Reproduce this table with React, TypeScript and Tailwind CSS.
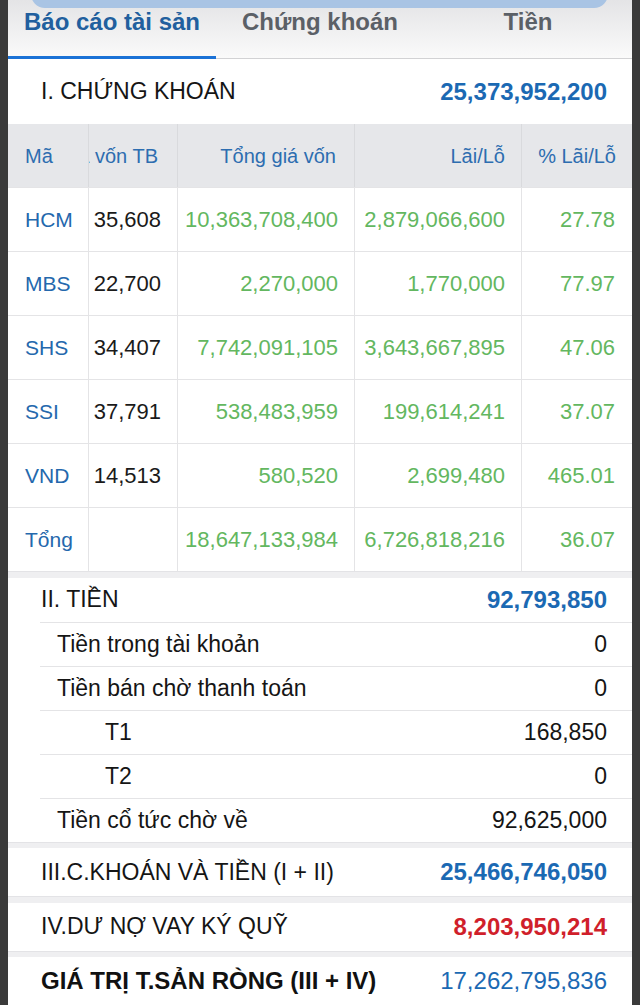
import React from "react";

const font = { fontFamily: '"Liberation Sans", Arial, sans-serif' };

const rows = [
  { code: "HCM", avg: "35,608", cost: "10,363,708,400", pl: "2,879,066,600", pct: "27.78" },
  { code: "MBS", avg: "22,700", cost: "2,270,000", pl: "1,770,000", pct: "77.97" },
  { code: "SHS", avg: "34,407", cost: "7,742,091,105", pl: "3,643,667,895", pct: "47.06" },
  { code: "SSI", avg: "37,791", cost: "538,483,959", pl: "199,614,241", pct: "37.07" },
  { code: "VND", avg: "14,513", cost: "580,520", pl: "2,699,480", pct: "465.01" },
  { code: "Tổng", avg: "", cost: "18,647,133,984", pl: "6,726,818,216", pct: "36.07" },
];

const cols = "grid grid-cols-[80px_89px_177px_167px_111px]";

function Band() {
  return <div className="h-[7px] bg-[#efeff1] border-t border-[#e3e3e6]" />;
}

export default function App() {
  return (
    <div className="w-[640px] h-[1005px] overflow-hidden bg-[#3a3a3a] px-[8px]" style={font}>
      <div className="bg-white h-full flex flex-col">
        {/* Tab bar */}
        <div className="relative h-[59px] bg-gradient-to-b from-[#e4e4e6] to-[#fafafa] border-b border-[#d2d2d4] shrink-0">
          <div className="absolute left-[23px] right-[24px] top-[-20px] h-[28px] rounded-b-[14px] bg-[#a9c4e4]" />
          <div className="grid grid-cols-3 h-full">
            <div className="relative flex justify-center pt-[7px]">
              <span className="text-[24px] leading-[30px] font-bold text-[#215f9e]">Báo cáo tài sản</span>
              <div className="absolute left-0 right-0 bottom-[-1px] h-[3px] bg-[#1b72d6]" />
            </div>
            <div className="flex justify-center pt-[7px]">
              <span className="text-[24px] leading-[30px] font-bold text-[#5b6067]">Chứng khoán</span>
            </div>
            <div className="flex justify-center pt-[7px]">
              <span className="text-[24px] leading-[30px] font-bold text-[#5b6067]">Tiền</span>
            </div>
          </div>
        </div>

        {/* Section I */}
        <div className="h-[65px] flex items-center justify-between pl-[33px] pr-[25px] shrink-0">
          <span className="text-[23px] text-[#151515]">I. CHỨNG KHOÁN</span>
          <span className="text-[24px] font-bold text-[#1b69b3]">25,373,952,200</span>
        </div>

        {/* Table */}
        <div className="shrink-0">
          <div className={`${cols} h-[63px] bg-[#e6e7ea] text-[20px] text-[#2d6db0]`}>
            <div className="flex items-center pl-[17px]">Mã</div>
            <div className="flex items-center justify-end pr-[19px] overflow-hidden border-l border-[#d9dadd]">
              <span className="whitespace-nowrap shrink-0">Giá vốn TB</span>
            </div>
            <div className="flex items-center justify-end pr-[18px] border-l border-[#d9dadd]">Tổng giá vốn</div>
            <div className="flex items-center justify-end pr-[16px] border-l border-[#d9dadd]">Lãi/Lỗ</div>
            <div className="flex items-center justify-end pr-[16px] border-l border-[#d9dadd]">% Lãi/Lỗ</div>
          </div>
          {rows.map((r) => (
            <div key={r.code} className={`${cols} h-[64px] border-t border-[#e4e4e6] text-[22px]`}>
              <div className="flex items-center pl-[17px] text-[21px] text-[#2468ad]">{r.code}</div>
              <div className="flex items-center justify-end pr-[16px] text-[#1a1a1a] border-l border-[#e4e4e6]">{r.avg}</div>
              <div className="flex items-center justify-end pr-[16px] text-[#63b760] border-l border-[#e4e4e6]">{r.cost}</div>
              <div className="flex items-center justify-end pr-[16px] text-[#63b760] border-l border-[#e4e4e6]">{r.pl}</div>
              <div className="flex items-center justify-end pr-[17px] text-[#63b760] border-l border-[#e4e4e6]">{r.pct}</div>
            </div>
          ))}
        </div>
        <Band />

        {/* Section II */}
        <div className="h-[44px] flex items-center justify-between pl-[33px] pr-[25px] shrink-0">
          <span className="text-[23px] text-[#151515]">II. TIỀN</span>
          <span className="text-[24px] font-bold text-[#1b69b3]">92,793,850</span>
        </div>
        <div className="ml-[32px] text-[23px] text-[#151515]">
          {[
            { label: "Tiền trong tài khoản", value: "0", indent: "pl-[17px]" },
            { label: "Tiền bán chờ thanh toán", value: "0", indent: "pl-[17px]" },
            { label: "T1", value: "168,850", indent: "pl-[65px]" },
            { label: "T2", value: "0", indent: "pl-[65px]" },
            { label: "Tiền cổ tức chờ về", value: "92,625,000", indent: "pl-[17px]" },
          ].map((it) => (
            <div key={it.label} className={`h-[44px] border-t border-[#e4e4e6] flex items-center justify-between pr-[25px] ${it.indent}`}>
              <span>{it.label}</span>
              <span>{it.value}</span>
            </div>
          ))}
        </div>
        <Band />

        <div className="h-[48px] flex items-center justify-between pl-[33px] pr-[25px] shrink-0">
          <span className="text-[23px] text-[#151515]">III.C.KHOÁN VÀ TIỀN (I + II)</span>
          <span className="text-[24px] font-bold text-[#1b69b3]">25,466,746,050</span>
        </div>
        <Band />
        <div className="h-[48px] flex items-center justify-between pl-[33px] pr-[25px] shrink-0">
          <span className="text-[23px] text-[#151515]">IV.DƯ NỢ VAY KÝ QUỸ</span>
          <span className="text-[24px] font-bold text-[#d01f2b]">8,203,950,214</span>
        </div>
        <Band />
        <div className="h-[48px] flex items-center justify-between pl-[33px] pr-[25px] shrink-0">
          <span className="text-[24px] font-bold text-[#111]">GIÁ TRỊ T.SẢN RÒNG (III + IV)</span>
          <span className="text-[24px] text-[#1b69b3]">17,262,795,836</span>
        </div>
      </div>
    </div>
  );
}
